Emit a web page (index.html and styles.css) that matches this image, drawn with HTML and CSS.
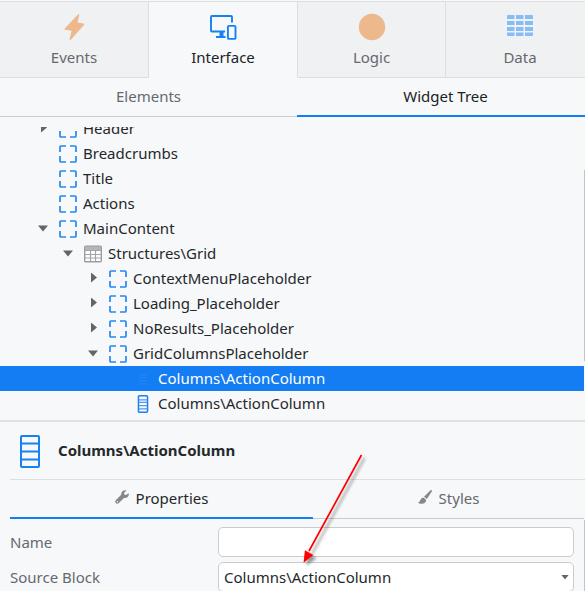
FILE: index.html
```html
<!DOCTYPE html>
<html lang="en">
<head>
<meta charset="utf-8">
<title>Widget Tree</title>
<link rel="stylesheet" href="styles.css">
</head>
<body>
<svg class="defs" aria-hidden="true">
  <symbol id="placeholder" viewBox="0 0 18 18"><path d="M1 7V2Q1 1 2 1H7M11 1H16Q17 1 17 2V7M17 11V16Q17 17 16 17H11M7 17H2Q1 17 1 16V11" fill="none" stroke="#2488f0" stroke-width="1.7"/></symbol>
  <symbol id="grid" viewBox="0 0 18 17"><rect x=".7" y=".7" width="16.6" height="15.6" rx="1" fill="#fff" stroke="#9b9c9e" stroke-width="1.4"/><path d="M1 1H17V4.5H1Z" fill="#b4b5b7"/><path d="M1 5H17M1 9H17M1 12.5H17M6.5 5V16M11.5 5V16" stroke="#a3a4a6" stroke-width="1.2"/></symbol>
  <symbol id="column" viewBox="0 0 10 17"><rect x=".7" y=".7" width="8.6" height="15.6" rx="1" fill="none" stroke="#1c7ff0" stroke-width="1.4"/><path d="M1 4.5H9M1 7H9M1 10H9M1 13H9" stroke="#4a9af4" stroke-width="1.2"/></symbol>
</svg>
<main class="panel">
  <nav class="tabs">
    <div class="tab">
      <svg width="26" height="28" viewBox="0 0 26 28"><path d="M17.2 1.2Q18.4.6 18.2 2L16.6 9.6L22.6 10.6Q23.8 11 23 12L9.8 26.8Q8.4 27.8 8.6 26.2L10.6 17.8L4.2 16.8Q3 16.4 4 15.2Z" fill="#ecb88c"/></svg>
      <span>Events</span>
    </div>
    <div class="tab active">
      <svg width="28" height="28" viewBox="0 0 28 28" fill="none" stroke="#1681f2" stroke-width="1.9"><path d="M23 9.5V4Q23 3 22 3H3Q2 3 2 4V17.5Q2 18.5 3 18.5H16M7 24H16.5"/><path d="M12.5 18.5V23.5" stroke-width="4"/><rect x="18.9" y="12.9" width="7.6" height="13" rx="1"/></svg>
      <span>Interface</span>
    </div>
    <div class="tab">
      <svg width="28" height="28" viewBox="0 0 28 28"><circle cx="14" cy="14" r="13.2" fill="#ecb88c"/></svg>
      <span>Logic</span>
    </div>
    <div class="tab">
      <svg width="28" height="28" viewBox="0 0 28 28" fill="#88bcf5"><path d="M1 3Q1 2 2 2H8.5V6H1ZM10 2H17.5V6H10ZM19 2H26Q27 2 27 3V6H19ZM1 8H8.5V12H1ZM10 8H17.5V12H10ZM19 8H27V12H19ZM1 14H8.5V18H1ZM10 14H17.5V18H10ZM19 14H27V18H19ZM1 19.5H8.5V23H2Q1 23 1 22ZM10 19.5H17.5V23H10ZM19 19.5H27V22Q27 23 26 23H19Z"/></svg>
      <span>Data</span>
    </div>
  </nav>
  <nav class="subtabs">
    <div class="subtab">Elements</div>
    <div class="subtab active">Widget Tree</div>
  </nav>
  <section class="tree">
    <div class="rows">
      <div class="row level1"><i class="toggle closed"></i><svg class="box"><use href="#placeholder"/></svg><span>Header</span></div>
      <div class="row level1"><i class="toggle"></i><svg class="box"><use href="#placeholder"/></svg><span>Breadcrumbs</span></div>
      <div class="row level1"><i class="toggle"></i><svg class="box"><use href="#placeholder"/></svg><span>Title</span></div>
      <div class="row level1"><i class="toggle"></i><svg class="box"><use href="#placeholder"/></svg><span>Actions</span></div>
      <div class="row level1"><i class="toggle open"></i><svg class="box"><use href="#placeholder"/></svg><span>MainContent</span></div>
      <div class="row level2"><i class="toggle open"></i><svg class="box"><use href="#grid"/></svg><span>Structures\Grid</span></div>
      <div class="row level3"><i class="toggle closed"></i><svg class="box"><use href="#placeholder"/></svg><span>ContextMenuPlaceholder</span></div>
      <div class="row level3"><i class="toggle closed"></i><svg class="box"><use href="#placeholder"/></svg><span>Loading_Placeholder</span></div>
      <div class="row level3"><i class="toggle closed"></i><svg class="box"><use href="#placeholder"/></svg><span>NoResults_Placeholder</span></div>
      <div class="row level3"><i class="toggle open"></i><svg class="box"><use href="#placeholder"/></svg><span>GridColumnsPlaceholder</span></div>
      <div class="row level4 selected"><i class="toggle"></i><svg class="box"><use href="#column"/></svg><span>Columns\ActionColumn</span></div>
      <div class="row level4"><i class="toggle"></i><svg class="box"><use href="#column"/></svg><span>Columns\ActionColumn</span></div>
    </div>
    <div class="scrollbar"></div>
  </section>
  <section class="details">
    <header class="title">
      <svg width="20" height="33" viewBox="0 0 20 33" fill="none" stroke="#1681f2" stroke-width="2"><rect x="1" y="1" width="18" height="31" rx="1"/><path d="M1 8.5H19M1 16.5H19M1 24.5H19"/></svg>
      <h1>Columns\ActionColumn</h1>
    </header>
    <nav class="detail-tabs">
      <div class="detail-tab active">
        <svg width="14" height="14" viewBox="0 0 14 14"><path d="M13.6 3.2L11 5L9.3 4.5L9 2.9L11.5.4C9.2-.5 5.9 1 6.2 4.7L.7 10.2Q-.2 11.6.7 12.9Q2 14.3 3.6 13.3L9 8C12 8.4 14.5 6.2 13.6 3.2Z" fill="#85878a"/><circle cx="2.4" cy="11.8" r=".7" fill="#f7f8fa"/></svg>
        <span>Properties</span>
      </div>
      <div class="detail-tab">
        <svg width="14" height="14" viewBox="0 0 14 14" fill="#85878a"><path d="M13.8.2Q14.3.7 13.5 2L8.8 9L6 6.8L12 .8Q13.2-.3 13.8.2Z"/><path d="M5.2 7.4L8.1 9.7Q8.2 14 3 13.8Q1 13.8 0 12.3Q1.5 12.3 2 10.7Q2.8 7.9 5.2 7.4Z"/></svg>
        <span>Styles</span>
      </div>
    </nav>
    <div class="fields">
      <label>Name</label><div class="input"></div>
      <label>Source Block</label><div class="input"><span>Columns\ActionColumn</span><i class="caret"></i></div>
      <div class="fields-scroll"></div>
    </div>
  </section>
  <svg class="pointer" width="80" height="125" viewBox="0 0 80 125"><path d="M66.5 5L14 101" fill="none" stroke="#f00" stroke-width="1.7"/><path d="M9.5 111L10.5 101.5L17 105Z" fill="#f00" stroke="#f00" stroke-width="1.5"/></svg>
</main>
</body>
</html>
```

FILE: styles.css
```css
* { box-sizing: border-box; }
body {
  margin: 0;
  background: #f7f8fa;
  color: #25282b;
  font: 15px/20px "Noto Sans", sans-serif;
}
.defs { position: absolute; width: 0; height: 0; }
.panel { position: relative; height: 591px; overflow: hidden; padding-top: 1px; }
svg { display: block; flex: none; }

.tabs {
  display: grid;
  grid-template-columns: 149px 149px 148px 149px;
  height: 77px;
  border-top: 1px solid #dcdee0;
}
.tab {
  display: flex;
  flex-direction: column;
  align-items: center;
  gap: 6px;
  padding-top: 11px;
  border-right: 1px solid #dcdee0;
  border-bottom: 1px solid #dcdee0;
  background: #f0f1f3;
  color: #65696e;
}
.tab.active { background: #f7f8fa; border-bottom-color: #f7f8fa; color: #202326; }

.subtabs { display: grid; grid-template-columns: 297px 297px; height: 39px; }
.subtab {
  padding-top: 8px;
  text-align: center;
  color: #65696e;
  border-bottom: 1px solid #c9cccf;
}
.subtab.active { color: #202326; border-bottom: 2px solid #147df4; }

.tree {
  display: grid;
  grid-template-columns: 584px 1px;
  height: 303px;
  padding-top: 10px;
}
.rows { height: 293px; overflow: hidden; }
.row { display: flex; align-items: center; height: 25px; }
.row:first-child { margin-top: -11px; }
.row span { margin: 0 0 2px 6px; }
.level1 { padding-left: 38px; }
.level2 { padding-left: 63px; }
.level3 { padding-left: 88px; }
.level4 { padding-left: 113px; }
.box { width: 18px; height: 18px; margin-left: 11px; }
.toggle { width: 10px; height: 10px; flex: none; }
.toggle.open { background: #636669; clip-path: polygon(0 2px, 100% 2px, 50% 8px); }
.toggle.closed { margin-bottom: 2px; background: #636669; clip-path: polygon(3px 0, 9px 5px, 3px 10px); }
.selected { background: #147df4; color: #fff; }
.selected .box { opacity: .25; }
.scrollbar { height: 191px; margin-top: 43px; background: #c2c4c7; }

.details { border-top: 2px solid #dfe1e3; }
.title {
  display: flex;
  align-items: center;
  gap: 18px;
  height: 58px;
  margin-left: 10px;
  padding-left: 10px;
  border-bottom: 1px solid #dcdee0;
}
.title svg { margin-top: 1px; }
h1 { margin: 0 0 2px; font-size: 15px; line-height: 20px; font-weight: 700; }
.detail-tabs {
  display: grid;
  grid-template-columns: 303px 271px;
  height: 39px;
  margin-left: 10px;
}
.detail-tab {
  display: flex;
  justify-content: center;
  gap: 7px;
  padding-top: 8px;
  color: #65696e;
  border-bottom: 1px solid #c9cccf;
}
.detail-tab svg { margin-top: 2px; }
.detail-tab.active { color: #25282b; border-bottom: 2px solid #147df4; }

.fields {
  position: relative;
  display: grid;
  grid-template-columns: 208px 356px;
  row-gap: 5px;
  padding: 8px 0 0 10px;
}
label { padding-top: 5px; color: #65696e; }
.input {
  display: flex;
  align-items: center;
  justify-content: space-between;
  height: 30px;
  padding: 0 5px;
  border: 1px solid #c9cbce;
  border-radius: 5px;
  background: #fff;
}
.caret { width: 8px; height: 5px; margin-right: -1px; background: #636669; clip-path: polygon(0 0, 100% 0, 50% 100%); }
.fields-scroll { position: absolute; right: 0; top: 1px; width: 1px; height: 80px; background: #c2c4c7; }
.pointer { position: absolute; left: 295px; top: 450px; filter: drop-shadow(3px 3px 1.5px rgba(0, 0, 0, .4)); }
```
